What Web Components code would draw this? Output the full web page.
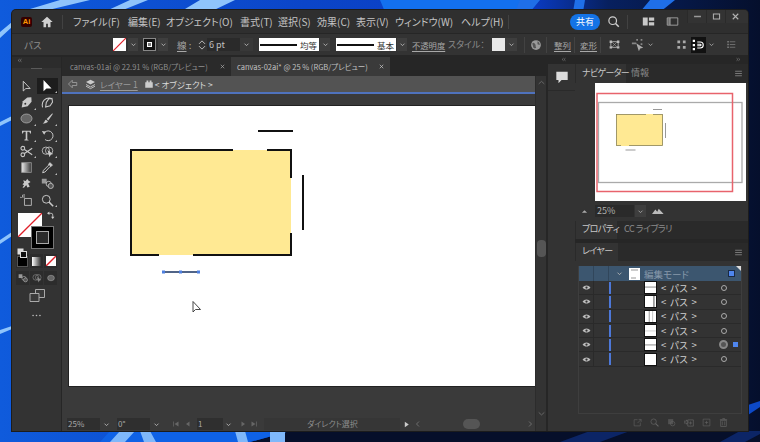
<!DOCTYPE html>
<html lang="ja">
<head>
<meta charset="utf-8">
<title>Illustrator</title>
<style>
  html, body { margin: 0; width: 760px; height: 442px; overflow: hidden; background: #06122e; }
</style>
</head>
<body>
<ai-desktop>
  <ai-window></ai-window>
</ai-desktop>
<script>
// HELPER

const FONT = `"Noto Sans CJK JP", "Noto Sans", sans-serif`;
const BASE = `:host { display: block; box-sizing: border-box; font-family: ${FONT}; font-feature-settings: "palt"; } * { box-sizing: border-box; }`;

const ICONS = {
  chevron: `<path d="M4.5 6.5 8 10l3.5-3.5" fill="none" stroke="currentColor" stroke-width="1.5"/>`,
  home: `<path d="M8 2 1.5 8H4v6h3v-4h2v4h3V8h2.5z" fill="currentColor"/>`,
  search: `<circle cx="7" cy="7" r="4.7" fill="none" stroke="currentColor" stroke-width="1.5"/><path d="m10.5 10.5 4 4" stroke="currentColor" stroke-width="1.8"/>`,
  layout: `<path d="M1 3h6v10H1zM8.500 3H15v4H8.500zM8.500 9H15v4H8.500z" fill="currentColor"/>`,
  panel: `<path d="M1.500 3.500h13v9h-13zM5 3.500v9" fill="none" stroke="currentColor"/><path d="M2 4h3v8H2z" fill="currentColor" opacity=".5"/>`,
  min: `<path d="M3 8h10" stroke="currentColor" stroke-width="2"/>`,
  max: `<path d="M3.500 4.500h9v7h-9z" fill="none" stroke="currentColor" stroke-width="1.500"/>`,
  close: `<path d="m4 4 8 8m0-8-8 8" stroke="currentColor" stroke-width="1.600"/>`,
  globe: `<circle cx="8" cy="8" r="6.500" fill="#999"/><path d="M3 6c2-2 3 0 4 1s0 3 1 4-2 2-3 1-1-3-2-6zM10 3c2 1 3 3 3 5l-3-1z" fill="#555"/>`,
  crop: `<path d="M5 4.500h6M5 11.500h6M3.500 6v4M12.500 6v4" stroke="currentColor"/><path d="M2 3h3v3H2zM11 3h3v3h-3zM2 10h3v3H2zM11 10h3v3h-3z" fill="currentColor"/><path d="m5 5 6 6m0-6-6 6" stroke="currentColor" stroke-width=".6"/>`,
  pick: `<path d="M6 1h2v2H6zM11 1h2v2h-2zM11 6h2v2h-2zM1 5h5v2H1z" fill="currentColor" opacity=".7"/><path d="m6 6 8 5-3.500 1-1.500 3z" fill="currentColor"/>`,
  dots: `<path d="M2 2h4v4H2zM10 2h4v4h-4zM2 10h4v4H2zM10 10h4v4h-4z" fill="currentColor"/>`,
  magnet: `<path d="M1 1h3v3H1zM1 6.500h3v3H1zM1 12h3v3H1z" fill="#fff"/><path d="M7 4h4a4 4 0 0 1 0 8H7M7 7h4a1 1 0 0 1 0 2H7" fill="none" stroke="#fff" stroke-width="1.500"/>`,
  list: `<path d="M2 3h2v2H2zM2 7h2v2H2zM2 11h2v2H2z" fill="currentColor"/><path d="M5.500 4h8M5.500 8h8M5.500 12h8" stroke="currentColor"/>`,
  menu: `<path d="M2 3h12v2H2zM2 7h12v2H2zM2 11h12v2H2z" fill="currentColor"/>`,
  back: `<path d="M7 3 2 8l5 5v-3h6V6H7z" fill="none" stroke="currentColor"/>`,
  stack: `<path d="m8 1 6.500 3.500L8 8 1.500 4.500z" fill="currentColor"/><path d="M1.500 8 8 11.500 14.500 8M1.500 10.500 8 14l6.500-3.500" fill="none" stroke="currentColor" stroke-width="1.300"/>`,
  group: `<path d="M2 5h12v9H2zM4 2.500h3V5H4zM9 2.500h3V5H9z" fill="currentColor"/>`,
  comment: `<path d="M1.500 2h13v9.500H7.500L4 15v-3.500H1.500z" fill="currentColor"/>`,
  direct: `<path d="M4 1.500v12l3.200-3h5.300z" fill="none" stroke="currentColor" stroke-width="1.200"/>`,
  select: `<path d="M4 1v13l3.400-3.200h5.800z" fill="currentColor"/>`,
  pen: `<path d="M14 1.500 9 1.800 3.500 6.500 2 14l7.500-1.500L14.200 7z" fill="currentColor"/><circle cx="6.500" cy="9.500" r="1.200" fill="#333"/>`,
  curve: `<path d="M13.500 3 9.500 3.500 6.500 8l-.8 5.500 5.500-1.500 3-4.500zM2 14C0 7 5 1 13.500 3" fill="none" stroke="currentColor" stroke-width="1.300"/>`,
  ellipse: `<ellipse cx="8" cy="8" rx="6.800" ry="5.500" fill="#666" stroke="#aaa"/>`,
  brush: `<path d="M14 1.500 7 8.500 9 10.500l5.500-8zM6 9.500c-2 1-1 3-4 4.500 3 .5 6-.5 6.500-2.500z" fill="currentColor"/>`,
  type: `<path d="M2.500 2h11v3.500h-1l-1-2H9v9.500l1.500.5v.5h-5V13l1.500-.5V3.500H4.500l-1 2h-1z" fill="currentColor"/>`,
  rotate: `<path d="M3.500 5.500A6 6 0 1 1 5 13" fill="none" stroke="currentColor" stroke-width="1.200"/><path d="M1 2.500 6 3 4 7z" fill="currentColor"/>`,
  scissors: `<circle cx="3.500" cy="4" r="2.300" fill="none" stroke="currentColor" stroke-width="1.300"/><circle cx="3.500" cy="12" r="2.300" fill="none" stroke="currentColor" stroke-width="1.300"/><path d="M5.500 5.500 15 12M5.500 10.500 15 4" stroke="currentColor" stroke-width="1.300"/>`,
  builder: `<circle cx="6" cy="7" r="4.500" fill="none" stroke="currentColor"/><circle cx="10" cy="7" r="4.500" fill="none" stroke="currentColor"/><path d="m8 6 7 5-3 1-1.500 3z" fill="currentColor"/>`,
  gradient: `<defs><linearGradient id="g"><stop offset="0" stop-color="#eee"/><stop offset="1" stop-color="#333"/></linearGradient></defs><path d="M2 2h12v12H2z" fill="url(#g)" stroke="#999"/>`,
  dropper: `<path d="m11 2 3 3-2 2-1 0-6 6.500-3 1 1-3L9.500 5V4z" fill="none" stroke="currentColor" stroke-width="1.200"/><path d="m11 2 3 3-2 2-3-3z" fill="currentColor"/>`,
  warp: `<path d="M3 13c3 1 3-3 5-3l1 3 3-1-2-4 3-2-3-2-1-2-2 3-3-1 1 3-2 2 2 1z" fill="currentColor"/>`,
  blend: `<path d="M1 2h6v6H1z" fill="#999"/><circle cx="9.500" cy="8.500" r="3.200" fill="none" stroke="currentColor"/><circle cx="12" cy="11" r="3.200" fill="#555" stroke="currentColor"/>`,
  artboard: `<path d="M5.500 5.500H14V14H5.500z" fill="none" stroke="currentColor"/><path d="M3 1v3H0M5 0v5" stroke="currentColor"/>`,
  zoom: `<circle cx="6.500" cy="6.500" r="4.800" fill="none" stroke="currentColor" stroke-width="1.200"/><path d="m10 10 5 5" stroke="currentColor" stroke-width="1.800"/>`,
  swap: `<path d="M3 4h6a3 3 0 0 1 3 3v4" fill="none" stroke="currentColor" stroke-width="1.500"/><path d="M6 1v6L2 4zM9 10h6l-3 4z" fill="currentColor"/>`,
  screen: `<path d="M6.500 1.500h9v8h-9z" fill="#3a3a3a" stroke="currentColor"/><path d="M1 5.500h9v8H1z" fill="#3a3a3a" stroke="currentColor"/>`,
  more: `<circle cx="3" cy="8" r="1.200" fill="currentColor"/><circle cx="8" cy="8" r="1.200" fill="currentColor"/><circle cx="13" cy="8" r="1.200" fill="currentColor"/>`,
  up: `<path d="M2 11h12L8 5z" fill="currentColor"/>`,
  mountains: `<path d="M0 12 4.500 6l2.500 3 2-4 6.500 7z" fill="currentColor"/>`,
  eye: `<path d="M1 8c3.500-5 10.500-5 14 0-3.500 5-10.500 5-14 0z" fill="currentColor"/><circle cx="8" cy="8" r="2" fill="#333"/>`,
  out: `<path d="M8 3H2v11h11V8M8 9l6-6M10 2.500h4.500V7" fill="none" stroke="currentColor"/>`,
  sublayer: `<path d="M2 2h9v9H2z" fill="currentColor" opacity=".6"/><circle cx="10" cy="10" r="4" fill="none" stroke="currentColor"/>`,
  collect: `<path d="M6 3h9v10H6z" fill="none" stroke="currentColor"/><path d="M0 5h4V3l3 3.500L4 10V8H0zM10.500 5.500v5M8 8h5" stroke="currentColor" fill="none"/>`,
  add: `<path d="M2 2h12v12H2z" fill="none" stroke="currentColor"/><path d="M8 5v6M5 8h6" stroke="currentColor"/>`,
  trash: `<path d="M3 4h10v11H3zM1.500 3h13M6 1h4v2" fill="none" stroke="currentColor" stroke-width="1.200"/><path d="M6 6v7M10 6v7" stroke="currentColor"/>`,
  first: `<path d="M3 3v10" stroke="currentColor" stroke-width="1.500"/><path d="M13 3v10L5 8z" fill="currentColor"/>`,
  prev: `<path d="M11 3v10L4 8z" fill="currentColor"/>`,
  next: `<path d="M5 3v10l7-5z" fill="currentColor"/>`,
  last: `<path d="M3 3v10l8-5z" fill="currentColor"/><path d="M13 3v10" stroke="currentColor" stroke-width="1.500"/>`,
  left: `<path d="M10 3 5 8l5 5" fill="none" stroke="currentColor" stroke-width="1.300"/>`,
  right: `<path d="m6 3 5 5-5 5" fill="none" stroke="currentColor" stroke-width="1.300"/>`,
  upc: `<path d="M3 10.500 8 6l5 4.500" fill="none" stroke="currentColor" stroke-width="1.300"/>`,
  downc: `<path d="M3 6 8 10.500 13 6" fill="none" stroke="currentColor" stroke-width="1.300"/>`,
  fold: `<path d="M7 3 3 6.500 7 10M12 3 8 6.500l4 3.500" fill="none" stroke="currentColor" stroke-width="1.300"/>`,
  unfold: `<path d="m4 3 4 3.500L4 10M9 3l4 3.500L9 10" fill="none" stroke="currentColor" stroke-width="1.300"/>`,
  spin: `<path d="M4 6.500 8 2.500l4 4M4 9.500l4 4 4-4" fill="none" stroke="currentColor" stroke-width="1.300"/>`,
};

function icon(name, size = 12, color = "", style = "") {
  return `<svg viewBox="0 0 16 16" width="${size}" height="${size}" style="display:block;flex:none;${color ? `color:${color};` : ""}${style}">${ICONS[name]}</svg>`;
}

function define(tag, css, markup) {
  customElements.define(tag, class extends HTMLElement {
    constructor() {
      super();
      const shadow = this.attachShadow({ mode: "open" });
      shadow.innerHTML = `<style>${BASE}${css}</style>${typeof markup === "function" ? markup(this) : markup}`;
    }
  });
}

// DESKTOP

define("ai-desktop", `
  :host { width: 760px; height: 442px; padding: 10px 12px 11px; position: relative; overflow: hidden; background: #06122e; }
  svg { position: absolute; inset: 0; }
  ::slotted(*) { position: relative; }
`, `
  <svg viewBox="0 0 760 442" width="760" height="442">
    <defs>
      <linearGradient id="sky" x1="0" x2="1" y1="0" y2="0">
        <stop offset="0" stop-color="#0f5bdc"/><stop offset=".4" stop-color="#0b45c8"/>
        <stop offset=".7" stop-color="#0a3bc4"/><stop offset=".8" stop-color="#07205f"/><stop offset="1" stop-color="#050f2c"/>
      </linearGradient>
    </defs>
    <rect width="760" height="442" fill="url(#sky)"/>
    <path d="M500 0h40l-10 12h-40zM575 0h10l-2 12h-10zM650 0h25l-15 12h-20z" fill="#1f6fe8"/>
    <path d="M380 0h140l-5 12H385z" fill="#1370ee"/>
    <path d="M60 0h30L40 12H20zM130 0h18l-30 12h-14zM200 0h35l-25 12h-30zM0 32 12 22v5L0 38zM0 122l12-6v4L0 126zM0 240l12-8v4L0 244zM0 330l12-4v3L0 334z" fill="#8fc4fb"/>
    <path d="M290 431h470v11H250z" fill="#060f2a"/>
    <path d="M110 431h180l-40 11H100z" fill="#0f62e6"/>
    <path d="M120 431h15l-10 11H110zM140 431h10l6 11h-12zM235 431h10l3 11h-10zM270 431h15v11h-15z" fill="#7fb8fa"/>
    <path d="M748 415l12-8v-6l-12 4z" fill="#0d49c7"/>
    <path d="M560 442l30-11h40l-30 11zM720 442l20-11h20v3l-15 8z" fill="#0c2566"/>
  </svg>
  <slot></slot>
`);

// WINDOW

define("ai-window", `
  :host { width: 736px; height: 421px; background: #262626; display: flex; flex-direction: column; border-radius: 4px 4px 0 0; overflow: hidden; box-shadow: 0 0 0 1px #1c1c1c; }
  .main { flex: 1; display: flex; min-height: 0; }
  .side { width: 173px; display: flex; flex-direction: column; }
`, `
  <ai-menubar></ai-menubar>
  <ai-controlbar></ai-controlbar>
  <div class="main">
    <ai-toolbox></ai-toolbox>
    <ai-document></ai-document>
    <ai-dock></ai-dock>
    <div class="side">
      <ai-navigator></ai-navigator>
      <ai-layers></ai-layers>
    </div>
  </div>
`);

define("ai-menubar", `
  :host { height: 23px; background: #2f2f2f; display: flex; align-items: center; font-size: 10px; color: #c4c4c4; position: relative; }
  .logo { width: 11px; height: 10px; margin: 0 0 0 9px; background: #330000; color: #ff9a00; font: bold 7.500px/10px "Liberation Sans", sans-serif; text-align: center; border-radius: 2px; }
  .home { margin-left: 8px; }
  .sep { width: 1px; height: 14px; background: #424242; }
  nav { display: grid; grid-template-columns: 55px 38px 74px 38px 39px 39px 39px 66px 41px; width: 429px; margin-left: 10px; white-space: nowrap; }
  .share { width: 30px; height: 16px; border-radius: 8px; background: #1473e6; color: #fff; text-align: center; font-size: 9px; line-height: 16px; margin-left: 61px; }
  .ctl { position: absolute; right: 0; top: 0; height: 13px; width: 61px; padding-right: 4px; display: flex; background: #333; }
  .ctl div { flex: 1; display: grid; place-items: center; border-left: 1px solid #2a2a2a; }
`, `
  <div class="logo">Ai</div>
  <div class="home">${icon("home", 14, "#d0d0d0")}</div>
  <div class="sep" style="margin-left:8px"></div>
  <nav>
    <span>ファイル(F)</span><span>編集(E)</span><span>オブジェクト(O)</span><span>書式(T)</span><span>選択(S)</span><span>効果(C)</span><span>表示(V)</span><span>ウィンドウ(W)</span><span>ヘルプ(H)</span>
  </nav>
  <div class="sep" style="margin-left:6px"></div>
  <div class="share">共有</div>
  <div style="margin-left:7px">${icon("search", 13, "#cfcfcf")}</div>
  <div class="sep" style="margin-left:7px"></div>
  <div style="margin-left:14px">${icon("layout", 13, "#c8c8c8")}</div>
  <div style="margin-left:11px">${icon("panel", 13, "#b0b0b0")}</div>
  <div class="ctl"><div>${icon("min", 11, "#999")}</div><div>${icon("max", 11, "#b0b0b0")}</div><div>${icon("close", 11, "#b0b0b0")}</div></div>
`);

define("ai-stroke-preview", `
  :host { width: 60px; height: 13px; background: #fff; display: flex; align-items: center; gap: 3px; font-size: 8.500px; color: #333; flex: none; }
  i { display: block; height: 2px; width: 37px; background: #111; margin-left: 1px; }
`, host => `<i></i><span>${host.getAttribute("label")}</span>`);

define("ai-controlbar", `
  :host { height: 23px; background: #333; display: flex; align-items: center; font-size: 9.500px; color: #a8a8a8; border-top: 1px solid #262626; border-bottom: 1px solid #262626; white-space: nowrap; }
  :host > * { flex: none; }
  .path { width: 101px; padding-left: 12px; color: #8d8d8d; }
  .fill { width: 13px; height: 13px; background: #fff; }
  .stroke { width: 13px; height: 13px; background: #111; border: 1px solid #888; display: grid; place-items: center; }
  .stroke b { display: block; width: 5px; height: 5px; background: #777; border: 1px solid #fff; }
  .chev { width: 10px; height: 13px; background: #3e3e3e; display: grid; place-items: center; color: #bbb; }
  .field { width: 33px; height: 13px; background: #2a2a2a; color: #c0c0c0; padding-left: 2px; line-height: 13px; font-size: 9px; }
  u { text-underline-offset: 2px; }
  .sep { width: 1px; height: 16px; background: #424242; }
  .swatch { width: 13px; height: 13px; background: #e8e8e8; }
`, `
  <div class="path">パス</div>
  <svg class="fill" viewBox="0 0 13 13"><path d="m0 13 13-13" stroke="#e0202a" stroke-width="1.200"/></svg>
  <div class="chev" style="margin:0 5px 0 2px">${icon("chevron", 9)}</div>
  <div class="stroke"><b></b></div>
  <div class="chev" style="margin:0 9px 0 2px">${icon("chevron", 9)}</div>
  <div style="width:19px"><u>線</u> :</div>
  <div style="width:12px;display:grid;place-items:center">${icon("spin", 12, "#bbb")}</div>
  <div class="field" style="margin-left:-1px">6 pt</div>
  <div class="chev" style="width:13px;margin-right:6px;background:#383838">${icon("chevron", 9)}</div>
  <ai-stroke-preview label="均等"></ai-stroke-preview>
  <div class="chev" style="margin:0 6px 0 1px">${icon("chevron", 9)}</div>
  <ai-stroke-preview label="基本"></ai-stroke-preview>
  <div class="chev" style="margin:0 5px 0 1px">${icon("chevron", 9)}</div>
  <div style="width:36px;font-size:8.300px"><u>不透明度</u></div>
  <div style="width:44px;color:#8d8d8d;font-size:9px">スタイル：</div>
  <div class="swatch"></div>
  <div class="chev" style="width:12px;margin-right:7px">${icon("chevron", 9)}</div>
  <div class="sep"></div>
  <div style="margin-left:5px">${icon("globe", 12)}</div>
  <div class="sep" style="margin-left:4px"></div>
  <div style="margin-left:7px;width:17px;font-size:8.500px"><u>整列</u></div>
  <div class="sep" style="margin-left:3px"></div>
  <div style="margin-left:5px;width:17px;font-size:8.500px"><u>変形</u></div>
  <div class="sep" style="margin-left:3px"></div>
  <div style="margin-left:7px">${icon("crop", 13, "#bbb")}</div>
  <div style="margin-left:10px">${icon("pick", 14, "#aaa")}</div>
  <div style="margin-left:1px">${icon("chevron", 9, "#aaa")}</div>
  <div style="margin-left:21px">${icon("dots", 11, "#aaa")}</div>
  <div style="margin-left:4px;background:#111;padding:2px 1px;width:15px;height:16px">${icon("magnet", 12)}</div>
  <div style="margin-left:1px">${icon("chevron", 9, "#aaa")}</div>
  <div style="margin-left:10px">${icon("list", 11, "#888")}</div>
`);

// TOOLBOX

define("ai-toolbox", `
  :host { width: 50px; background: #333; margin-top: 1px; border-right: 1px solid #262626; display: flex; flex-direction: column; align-items: stretch; }
  .head { height: 11px; color: #999; padding: 0 0 0 5px; background: #2c2c2c; }
  .grip { height: 1px; width: 11px; margin: 0 auto 0; background: #5a5a5a; }
  .tools { display: grid; grid-template-columns: 21px 21px; grid-auto-rows: 16.300px; justify-content: center; margin-top: 9px; }
  .tools div { display: grid; place-items: center; color: #c9c9c9; position: relative; }
  .tools .on { background: #1d1d1d; color: #fff; }
  .tools .fly::after { content: ""; position: absolute; right: 1px; bottom: 1px; width: 0; height: 0; border-bottom: 2px solid #bbb; border-left: 2px solid transparent; }
  .swatches { height: 35px; margin-top: 5px; position: relative; }
  .fillbox { position: absolute; left: 6px; top: 0; width: 24px; height: 24px; background: #fff; }
  .strokebox { position: absolute; left: 19px; top: 13px; width: 23px; height: 23px; background: #000; border: 1px solid #777; display: grid; place-items: center; }
  .strokebox b { display: block; width: 13px; height: 13px; border: 1px solid #aaa; background: #2b2b2b; }
  .swap { position: absolute; left: 34px; top: -2px; }
  .def { position: absolute; left: 5px; top: 26px; }
  .row { display: flex; margin: 5px 0 0 4px; height: 14px; }
  .row div { width: 14px; height: 14px; display: grid; place-items: center; background: #2c2c2c; border-right: 1px solid #333; }
  .row i { display: block; width: 9px; height: 9px; }
  .row.two { margin-top: 3px; }
  .center { display: grid; place-items: center; color: #999; }
`, `
  <div class="head">${icon("fold", 6, "#aaa", "margin-top:1px;")}</div>
  <div class="grip"></div>
  <div class="tools">
    <div>${icon("direct", 13)}</div><div class="on fly">${icon("select", 14)}</div>
    <div class="fly">${icon("pen", 13)}</div><div>${icon("curve", 13)}</div>
    <div class="fly">${icon("ellipse", 13)}</div><div class="fly">${icon("brush", 13)}</div>
    <div class="fly">${icon("type", 13)}</div><div class="fly">${icon("rotate", 13)}</div>
    <div class="fly">${icon("scissors", 13)}</div><div class="fly">${icon("builder", 13)}</div>
    <div>${icon("gradient", 13)}</div><div class="fly">${icon("dropper", 13)}</div>
    <div>${icon("warp", 13)}</div><div>${icon("blend", 13)}</div>
    <div>${icon("artboard", 13)}</div><div class="fly">${icon("zoom", 13)}</div>
  </div>
  <div class="swatches">
    <svg class="fillbox" viewBox="0 0 24 24"><path d="m0 24 24-24" stroke="#e0202a" stroke-width="1.300"/></svg>
    <div class="strokebox"><b></b></div>
    <div class="swap">${icon("swap", 9, "#ccc")}</div>
    <div class="def"><svg width="10" height="10" viewBox="0 0 10 10"><rect x=".5" y=".5" width="6" height="6" fill="#ddd"/><rect x="3.500" y="3.500" width="6" height="6" fill="#111" stroke="#ddd"/></svg></div>
  </div>
  <div class="row" style="margin-top:6px">
    <div><i style="background:#000;outline:1px solid #555"></i></div>
    <div><i style="background:linear-gradient(90deg,#fff,#333)"></i></div>
    <div><svg width="10" height="10" viewBox="0 0 10 10"><rect width="10" height="10" fill="#fff"/><path d="m0 10 10-10" stroke="#e0202a" stroke-width="1.400"/></svg></div>
  </div>
  <div class="row two">
    <div>${icon("blend", 10, "#aaa")}</div>
    <div>${icon("builder", 10, "#888")}</div>
    <div>${icon("ellipse", 8, "#888")}</div>
  </div>
  <div class="center" style="margin-top:3px;height:13px">${icon("screen", 16, "#aaa")}</div>
  <div class="center" style="margin-top:8px;height:12px">${icon("more", 11, "#bbb")}</div>
`);

// DOCUMENT

define("ai-artboard", `
  :host { width: 466px; height: 280px; background: #fff; box-shadow: 0 0 0 1px #222; }
  svg { display: block; }
`, `
  <svg viewBox="69 106 466 280" width="466" height="280">
    <rect x="131" y="150" width="160" height="105" fill="#ffe993"/>
    <path d="M233 150H131v105h28M193 255h98v-22M291 178v-28h-24" fill="none" stroke="#111" stroke-width="2"/>
    <path d="M258 131h35M303 175v55" stroke="#111" stroke-width="2" fill="none"/>
    <path d="M163.500 272h35" stroke="#16305f" stroke-width="1.500"/>
    <path d="M162 270.500h3v3h-3zM179 270.500h3v3h-3zM197 270.500h3v3h-3z" fill="#4d7fe0"/>
    <path d="M193 301.500v10.500l2.500-2.500h5z" fill="#fff" stroke="#333" stroke-width=".9"/>
  </svg>
`);

define("ai-document", `
  :host { width: 484px; display: flex; flex-direction: column; margin-top: 1px; }
  .tabs { height: 19px; display: flex; font-size: 7.500px; white-space: nowrap; background: #262626; }
  .tab { display: flex; align-items: center; justify-content: space-between; padding: 0 5px 0 8px; }
  .tab1 { width: 169px; background: #2a2a2a; color: #8f8f8f; }
  .tab2 { width: 159px; background: #3a3a3a; color: #c0c0c0; padding-left: 6px; }
  .body { flex: 1; display: flex; min-height: 0; }
  .view { flex: 1; background: #3a3a3a; display: flex; flex-direction: column; min-width: 0; }
  .crumb { height: 18px; background: #535353; border-bottom: 2px solid #4f72bd; display: flex; align-items: center; padding-left: 5px; font-size: 8.500px; color: #d8d8d8; }
  .crumb u { color: #9a9a9a; margin-left: 4px; text-underline-offset: 2px; }
  .pad { flex: 1; padding: 12px 0 0 7px; }
  .bar { width: 11px; background: #333; border-left: 1px solid #2c2c2c; display: flex; flex-direction: column; align-items: center; color: #777; padding-top: 2px; }
  .thumb { width: 9px; height: 17px; border-radius: 4px; background: #555; margin-top: 153px; }
  .grow { flex: 1; }
`, `
  <div class="tabs">
    <div class="tab tab1"><span>canvas-01ai @ 22.91 % (RGB/プレビュー)</span>${icon("close", 7, "#aaa")}</div>
    <div class="tab tab2"><span>canvas-02ai* @ 25 % (RGB/プレビュー)</span>${icon("close", 7, "#ccc")}</div>
  </div>
  <div class="body">
    <div class="view">
      <div class="crumb">
        ${icon("back", 12, "#aaa")}
        <span style="margin-left:6px">${icon("stack", 11, "#ccc")}</span>
        <u>レイヤー 1</u>
        <span style="margin-left:6px">${icon("group", 10, "#ccc")}</span>
        <span style="margin-left:1px">&lt; オブジェクト &gt;</span>
      </div>
      <div class="pad"><ai-artboard></ai-artboard></div>
    </div>
    <div class="bar">
      ${icon("upc", 9)}
      <div class="thumb"></div>
      <div class="grow"></div>
      <div style="margin-bottom:13px">${icon("downc", 9)}</div>
    </div>
  </div>
  <ai-statusbar></ai-statusbar>
`);

define("ai-statusbar", `
  :host { height: 14px; background: #3a3a3a; display: flex; align-items: center; font-size: 8px; color: #a8a8a8; padding-left: 5px; margin-top: -14px; position: relative; width: 473px; }
  .f { height: 12px; background: #2f2f2f; line-height: 12px; padding-left: 1px; }
  .c { width: 11px; display: grid; place-items: center; color: #bbb; }
  .m { color: #666; }
`, `
  <div class="f" style="width:33px">25%</div><div class="c" style="margin-left:1px">${icon("chevron", 9)}</div>
  <div class="f" style="width:33px;margin-left:5px">0°</div><div class="c" style="margin-left:1px">${icon("chevron", 9)}</div>
  <div class="m" style="margin-left:10px">${icon("first", 8)}</div>
  <div class="m" style="margin-left:4px">${icon("prev", 8)}</div>
  <div class="f" style="width:26px;margin-left:5px">1</div><div class="c">${icon("chevron", 9)}</div>
  <div class="m" style="margin-left:5px">${icon("next", 8)}</div>
  <div class="m" style="margin-left:3px">${icon("last", 8)}</div>
  <div class="f" style="width:136px;margin-left:6px;padding-left:43px;color:#8d8d8d;background:#363636">ダイレクト選択</div>
  <div style="margin-left:2px">${icon("next", 9, "#ccc")}</div>
  <div class="m" style="margin-left:3px;color:#888">${icon("left", 8)}</div>
  <div style="width:17px;height:10px;border-radius:5px;background:#555;margin-left:41px"></div>
  <div class="m" style="margin-left:46px;color:#888">${icon("right", 8)}</div>
`);

// DOCK + PANELS

define("ai-dock", `
  :host { width: 27px; margin-left: 2px; display: flex; flex-direction: column; align-items: stretch; }
  .top { height: 8px; display: flex; justify-content: flex-end; color: #999; padding: 1px 8px 0 0; }
  .col { flex: 1; background: #333; }
  .b { height: 27px; border-bottom: 1px solid #2a2a2a; display: grid; place-items: center; color: #ddd; }
`, `
  <div class="top">${icon("fold", 6)}</div>
  <div class="col"><div class="b">${icon("comment", 14)}</div></div>
`);

define("ai-navigator", `
  :host { height: 165px; flex: none; font-size: 9px; color: #c8c8c8; background: #333; }
  .strip { height: 8px; background: #262626; display: flex; justify-content: flex-end; padding: 1px 7px 0 0; color: #999; }
  .tabs { height: 19px; background: #2a2a2a; display: flex; align-items: center; white-space: nowrap; }
  .tab { height: 19px; line-height: 18px; }
  .on { background: #333; width: 50px; margin-left: 1px; padding-left: 6px; letter-spacing: -.7px; }
  .off { color: #8a8a8a; margin-left: 5px; }
  .menu { margin-left: auto; margin-right: 5px; }
  .thumb { display: block; margin-left: 20px; background: #fff; }
  .zoom { display: flex; align-items: center; height: 20px; padding-left: 6px; color: #aaa; }
  .f { width: 39px; height: 12px; background: #2a2a2a; margin-left: 7px; line-height: 12px; padding-left: 2px; color: #b0b0b0; }
  .c { width: 11px; height: 12px; background: #3e3e3e; margin-left: 1px; display: grid; place-items: center; }
`, `
  <div class="strip">${icon("unfold", 6)}</div>
  <div class="tabs">
    <div class="tab on">ナビゲーター</div>
    <div class="tab off">情報</div>
    <div class="menu">${icon("menu", 9, "#777")}</div>
  </div>
  <svg class="thumb" viewBox="595 83 151 118" width="151" height="118">
    <rect x="598.500" y="102.500" width="143.500" height="80" fill="none" stroke="#aaa" stroke-width="1.300"/>
    <rect x="597" y="93.500" width="135.500" height="98" fill="none" stroke="#e8636c" stroke-width="1.500"/>
    <rect x="616.500" y="114.500" width="46" height="31" fill="#ffe993" stroke="#8b8250" stroke-width=".8"/>
    <path d="M646 114.500h7M621 145.500h8" stroke="#ffe993"/>
    <path d="M653 109.500h9M665.500 123v15M625.500 150h10" stroke="#999"/>
  </svg>
  <div class="zoom">
    ${icon("up", 7)}
    <div class="f">25%</div>
    <div class="c">${icon("chevron", 9)}</div>
    <div style="margin-left:6px">${icon("mountains", 12, "#bbb")}</div>
  </div>
`);

define("ai-layer-row", `
  :host { height: 14.300px; display: flex; align-items: center; border-bottom: 1px solid #2a2a2a; font-size: 9.500px; color: #d0d0d0; }
  .eye { width: 15px; display: grid; place-items: center; border-right: 1px solid #2a2a2a; height: 100%; }
  .bar { width: 2px; height: 12px; background: #4d78d8; margin-left: 15px; }
  .thumb { width: 13px; height: 13px; margin-left: 33px; background: #fff; border: 1px solid #111; }
  .name { margin-left: 4px; letter-spacing: .3px; word-spacing: 1px; width: 60px; white-space: nowrap; }
  .t { width: 6px; height: 6px; border: 1px solid #aaa; border-radius: 50%; }
  .target { width: 9px; height: 9px; margin-left: -2px; border: 2px solid #888; background: #555; }
  .sel { width: 5px; height: 5px; background: #4f86ee; margin-left: 5px; }
`, host => {
  const lines = host.getAttribute("lines") || "";
  const selected = host.hasAttribute("selected");
  return `
    <div class="eye">${icon("eye", 9, "#bbb")}</div>
    <div class="bar"></div>
    <svg class="thumb" viewBox="0 0 13 13">${lines}</svg>
    <div class="name">&lt; パス &gt;</div>
    <div class="t${selected ? " target" : ""}"></div>
    ${selected ? `<div class="sel"></div>` : ""}
  `;
});

define("ai-layers", `
  :host { flex: 1; background: #333; font-size: 9px; color: #c8c8c8; display: flex; flex-direction: column; }
  .tabs { height: 18px; background: #2a2a2a; display: flex; align-items: center; flex: none; white-space: nowrap; }
  .tab { height: 18px; line-height: 16px; padding-left: 6px; }
  .on { background: #333; width: 42px; margin-left: 1px; letter-spacing: -.6px; }
  .off { color: #8a8a8a; padding-left: 7px; letter-spacing: -.5px; }
  .gap { height: 4px; background: #262626; flex: none; }
  .menu { margin-left: auto; margin-right: 5px; }
  .list { height: 148px; margin: 5px 6px 0 3px; border: 1px solid #3e3e3e; border-top: 0; display: flex; flex-direction: column; flex: none; width: 164px; }
  .head { height: 15px; background: #3c566f; display: flex; align-items: center; color: #8799ab; flex: none; position: relative; }
  .head .cell { width: 15px; height: 100%; border-right: 1px solid #31465b; }
  .head svg.t { width: 11px; height: 12px; background: #fff; margin-left: 5px; }
  .head .sel { width: 5px; height: 5px; background: #4f86ee; outline: 1px solid #1a2a44; position: absolute; right: 7px; top: 5px; }
  .corner { position: absolute; right: 0; top: 0; width: 0; height: 0; border-top: 5px solid #ddd; border-left: 5px solid transparent; }
  .foot { display: flex; gap: 8px; height: 17px; align-items: center; justify-content: flex-end; padding-right: 20px; color: #666; }
`, `
  <div class="tabs">
    <div class="tab on" style="width:41px">プロパティ</div>
    <div class="tab off">CC ライブラリ</div>
  </div>
  <div class="gap"></div>
  <div class="tabs">
    <div class="tab on">レイヤー</div>
    <div class="menu">${icon("menu", 9, "#777")}</div>
  </div>
  <div class="list">
    <div class="head">
      <div class="cell"></div><div class="cell"></div>
      <div style="margin-left:6px">${icon("chevron", 9, "#bbb")}</div>
      <svg class="t" viewBox="0 0 11 12"><path d="M2 2h7M2 10h5" stroke="#999"/></svg>
      <span style="margin-left:4px;font-size:9.500px">編集モード</span>
      <div class="sel"></div>
      <div class="corner"></div>
    </div>
    <ai-layer-row lines='<path d="M0 6h13" stroke="#777"/>'></ai-layer-row>
    <ai-layer-row lines='<path d="M10.500 0v13" stroke="#999" stroke-width="2"/>'></ai-layer-row>
    <ai-layer-row lines='<path d="M5 0v13" stroke="#888"/><path d="M9 0v13" stroke="#bbb"/>'></ai-layer-row>
    <ai-layer-row lines='<path d="M0 7h13" stroke="#ccc"/>'></ai-layer-row>
    <ai-layer-row selected lines='<path d="M0 7h13" stroke="#777"/>'></ai-layer-row>
    <ai-layer-row></ai-layer-row>
  </div>
  <div class="foot">
    ${icon("out", 9)}${icon("zoom", 9)}${icon("sublayer", 9)}${icon("collect", 10)}${icon("add", 9)}${icon("trash", 9)}
  </div>
`);
</script>
</body>
</html>
